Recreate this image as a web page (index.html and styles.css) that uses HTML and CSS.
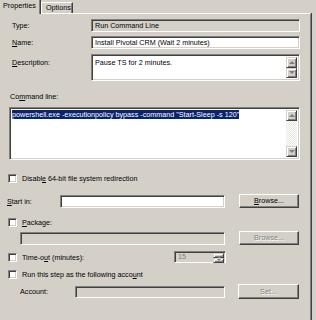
FILE: index.html
```html
<!doctype html>
<html>
<head>
<meta charset="utf-8">
<title>Run Command Line</title>
<link rel="stylesheet" href="styles.css">
</head>
<body>

<div class="tabs">
    <div class="tab active">Properties</div>
    <div class="tab">Options</div>
</div>

<div class="panel">
    <div class="row r-type">
        <span class="lbl">Type:</span>
        <div class="field ro">Run Command Line</div>
    </div>
    <div class="row r-name">
        <span class="lbl"><u>N</u>ame:</span>
        <div class="field">Install Pivotal CRM (Wait 2 minutes)</div>
    </div>
    <div class="row r-desc">
        <span class="lbl"><u>D</u>escription:</span>
        <div class="field memo">
            <div class="txt">Pause TS for 2 minutes.</div>
            <div class="vscroll">
                <span class="sb up"></span>
                <span class="sb down"></span>
            </div>
        </div>
    </div>

    <div class="cap">Co<u>m</u>mand line:</div>
    <div class="field memo cmd">
        <div class="txt"><span class="sel">powershell.exe -executionpolicy bypass -command "Start-Sleep -s 120"</span></div>
        <div class="vscroll">
            <span class="sb up"></span>
            <span class="track"></span>
            <span class="sb down"></span>
        </div>
    </div>

    <div class="chk r-64"><span class="box"></span><span>Disabl<u>e</u> 64-bit file system redirection</span></div>

    <div class="row r-start">
        <span class="lbl2"><u>S</u>tart in:</span>
        <div class="field w165"></div>
        <span class="btn"><u>B</u>rowse...</span>
    </div>

    <div class="chk r-pkg"><span class="box"></span><span><u>P</u>ackage:</span></div>
    <div class="row r-pkgf">
        <div class="field ro w205"></div>
        <span class="btn dis">Browse...</span>
    </div>

    <div class="row r-time">
        <span class="chk"><span class="box"></span><span>Time-o<u>u</u>t (minutes):</span></span>
        <div class="spin">
            <span class="num">15</span>
            <span class="arrows">
                <span class="sb up"></span>
                <span class="sb down"></span>
            </span>
        </div>
    </div>

    <div class="chk r-run"><span class="box"></span><span>Run this step as the following acco<u>u</u>nt</span></div>

    <div class="row r-acct">
        <span class="lbl3">Account:</span>
        <div class="field ro w150"></div>
        <span class="btn dis set">Set...</span>
    </div>
</div>

</body>
</html>
```

FILE: styles.css
```css
*{ margin: 0; padding: 0; box-sizing: border-box; }
u{ text-decoration: underline; text-underline-offset: 1px; }

body{ width: 316px; height: 320px; overflow: hidden; background: #d4d0c8; color: #000; font: 7.2px "Liberation Sans", Arial, sans-serif; }

/* tabs */
.tabs{ display: flex; align-items: flex-end; height: 13px; }
.tab{ width: 32px; height: 11px; padding-left: 4px; border-top: 1px solid #fff; border-left: 1px solid #fff; border-right: 1px solid #404040; box-shadow: inset -1px 0 #808080; line-height: 9px; }
.tab.active{ width: 41px; height: 14px; margin-bottom: -1px; padding-left: 3px; border-left: none; border-top: none; position: relative; background: #d4d0c8; line-height: 12px; }

/* panel */
.panel{ height: 307px; margin-right: 5px; padding: 0 10px 0 8px; border-top: 1px solid #fff; border-right: 1px solid #808080; box-shadow: 1px 0 #404040; }

.row{ display: flex; align-items: center; }
.lbl{ width: 83px; padding-left: 4px; }
.lbl2{ width: 53px; margin-left: -1px; }
.lbl3{ width: 67px; padding-left: 12px; }

/* sunken boxes */
.field, .box, .spin{ border: 1px solid; border-color: #808080 #fff #fff #808080; box-shadow: inset 1px 1px #404040, inset -1px -1px #d4d0c8; }
.field{ flex: 1; height: 13px; padding: 0 3px; background: #fff; line-height: 11px; white-space: nowrap; overflow: hidden; }
.field.ro{ background: #d4d0c8; }
.w165{ flex: none; width: 165px; }
.w205{ flex: none; width: 205px; margin-left: 12px; }
.w150{ flex: none; width: 150px; }

.memo{ display: flex; height: 27px; padding: 2px 2px 2px 3px; white-space: normal; }
.memo .txt{ flex: 1; padding-top: 1px; line-height: 9px; }
.vscroll{ width: 11px; display: flex; flex-direction: column; justify-content: space-between; }
.track{ flex: 1; background: repeating-conic-gradient(#fff 0 25%, #e8e6e1 0 50%) 0 0/2px 2px; }

.sb{ display: flex; align-items: center; justify-content: center; width: 11px; height: 11px; background: #d4d0c8; border: 1px solid; border-color: #d4d0c8 #404040 #404040 #d4d0c8; box-shadow: inset 1px 1px #fff, inset -1px -1px #808080; }
.sb:after{ content: ''; border: 3px solid transparent; }
.sb.up:after{ border-bottom-color: #808080; border-top-width: 0; }
.sb.down:after{ border-top-color: #808080; border-bottom-width: 0; }

.r-type{ margin-top: 5px; }
.r-name{ margin-top: 4px; }
.r-desc{ margin-top: 5px; align-items: flex-start; }
.r-desc .lbl{ padding-top: 4px; }

.cap{ margin-top: 11px; padding-left: 2px; height: 10px; line-height: 10px; }
.cmd{ flex: none; height: 53px; margin: 5px 0 0 1px; padding-left: 2px; }
.cmd .txt{ padding-top: 0; }
.sel{ background: #0a246a; color: #fff; white-space: nowrap; }

/* checkboxes */
.chk{ display: flex; align-items: center; height: 9px; }
.box{ width: 9px; height: 9px; margin-right: 5px; background: #fff; }
.r-64{ margin-top: 14px; }
.r-pkg{ margin-top: 10px; }
.r-run{ margin-top: 7px; }

.r-start{ margin-top: 11px; height: 14px; }
.r-pkgf{ margin-top: 4px; height: 14px; }
.r-time{ margin-top: 6px; height: 12px; }
.r-acct{ margin-top: 5px; height: 15px; }
.r-acct .field{ height: 12px; }

/* buttons */
.btn{ width: 60px; height: 14px; margin-left: 14px; background: #d4d0c8; border: 1px solid; border-color: #fff #404040 #404040 #fff; box-shadow: inset -1px -1px #808080; text-align: center; line-height: 12px; }
.btn.dis{ color: #808080; text-shadow: 1px 1px #fff; }
.btn.set{ width: 61px; height: 15px; margin-left: 13px; line-height: 13px; }

/* spinner */
.spin{ display: flex; width: 52px; height: 12px; margin-left: auto; margin-right: 74px; background: #d4d0c8; }
.spin .num{ flex: 1; padding-left: 3px; color: #808080; line-height: 10px; }
.spin .arrows{ display: flex; flex-direction: column; padding: 1px 1px 1px 0; }
.spin .sb{ height: 5px; }
.spin .sb:after{ border-width: 2px; }
```
